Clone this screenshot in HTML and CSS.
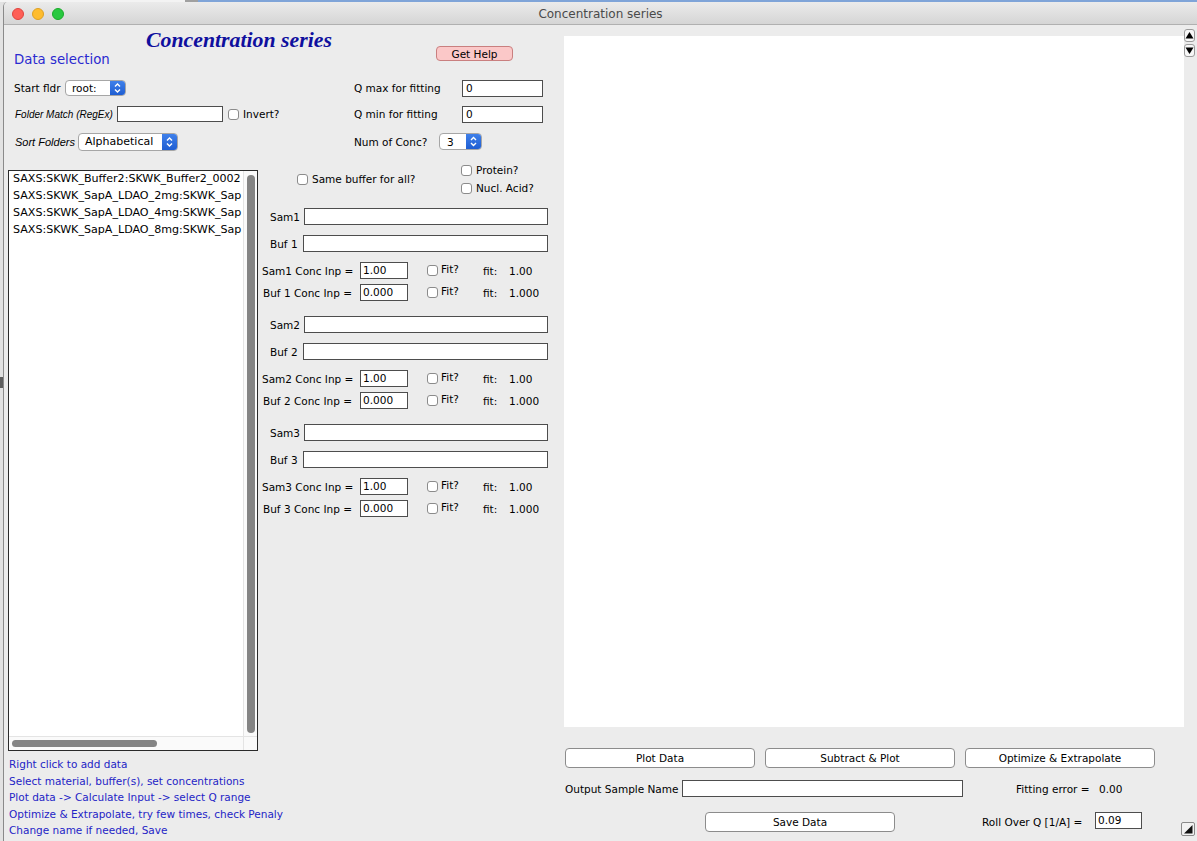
FILE: index.html
```html
<!DOCTYPE html>
<html>
<head>
<meta charset="utf-8">
<title>Concentration series</title>
<link rel="stylesheet" href="styles.css">
</head>
<body>
<div class="topstrip"><div class="ts-a"></div><div class="ts-b"></div><div class="ts-c"></div></div>
<div class="screen">
  <div class="desk-edge"><div class="edge-mark"></div></div>
  <div class="window">
    <div class="titlebar">
      <div class="lights"><span class="light red"></span><span class="light yellow"></span><span class="light green"></span></div>
      <div class="wtitle">Concentration series</div>
    </div>
    <div class="content">
      <div class="leftpanel">
        <div class="topgrid">
          <div class="head">
            <div class="ptitle">Concentration series</div>
            <div class="dsel">Data selection</div>
          </div>
          <div class="helpcell"><div class="btn help">Get Help</div></div>

          <div class="row r-start">
            <span class="lbl l-start">Start fldr</span>
            <span class="popup p-root"><span class="ptxt">root:</span><span class="pbtn"><svg width="15" height="16" viewBox="0 0 15 16"><polyline points="5,6.5 7.5,4 10,6.5" fill="none" stroke="#fff" stroke-width="1.4"/><polyline points="5,9.5 7.5,12 10,9.5" fill="none" stroke="#fff" stroke-width="1.4"/></svg></span></span>
          </div>
          <div class="row r-q">
            <span class="lbl l-q">Q max for fitting</span>
            <span class="inp i-q">0</span>
          </div>

          <div class="row r-folder">
            <span class="lbl l-folder">Folder Match (RegEx)</span>
            <span class="inp i-folder"></span>
            <span class="cb cb-inv"></span>
            <span class="cbt">Invert?</span>
          </div>
          <div class="row r-q">
            <span class="lbl l-q">Q min for fitting</span>
            <span class="inp i-q">0</span>
          </div>

          <div class="row r-sort">
            <span class="lbl l-sort">Sort Folders</span>
            <span class="popup p-sort"><span class="ptxt">Alphabetical</span><span class="pbtn"><svg width="15" height="18" viewBox="0 0 15 18"><polyline points="5,7.5 7.5,5 10,7.5" fill="none" stroke="#fff" stroke-width="1.4"/><polyline points="5,10.5 7.5,13 10,10.5" fill="none" stroke="#fff" stroke-width="1.4"/></svg></span></span>
          </div>
          <div class="row r-num">
            <span class="lbl l-num">Num of Conc?</span>
            <span class="popup p-num"><span class="ptxt">3</span><span class="pbtn"><svg width="15" height="17" viewBox="0 0 15 17"><polyline points="5,7 7.5,4.5 10,7" fill="none" stroke="#fff" stroke-width="1.4"/><polyline points="5,10 7.5,12.5 10,10" fill="none" stroke="#fff" stroke-width="1.4"/></svg></span></span>
          </div>
        </div>

        <div class="main">
          <div class="listcol">
            <div class="listbox">
              <div class="items">
                <div class="item">SAXS:SKWK_Buffer2:SKWK_Buffer2_0002</div>
                <div class="item">SAXS:SKWK_SapA_LDAO_2mg:SKWK_Sap</div>
                <div class="item">SAXS:SKWK_SapA_LDAO_4mg:SKWK_Sap</div>
                <div class="item">SAXS:SKWK_SapA_LDAO_8mg:SKWK_Sap</div>
              </div>
              <div class="vtrack"><div class="vthumb"></div></div>
              <div class="htrack"><div class="hthumb"></div></div>
              <div class="corner"></div>
            </div>
            <div class="helptext">
              <div>Right click to add data</div>
              <div>Select material, buffer(s), set concentrations</div>
              <div>Plot data -&gt; Calculate Input -&gt; select Q range</div>
              <div>Optimize &amp; Extrapolate, try few times, check Penaly</div>
              <div>Change name if needed, Save</div>
            </div>
          </div>

          <div class="midcol">
            <div class="mtop">
              <div class="same"><span class="cb"></span><span class="cbt">Same buffer for all?</span></div>
              <div class="prot">
                <div class="pline"><span class="cb"></span><span class="cbt">Protein?</span></div>
                <div class="pline"><span class="cb"></span><span class="cbt">Nucl. Acid?</span></div>
              </div>
            </div>

            <div class="grp g1">
              <div class="frow"><span class="slbl">Sam1</span><span class="inp wide"></span></div>
              <div class="frow brow"><span class="slbl blbl">Buf 1</span><span class="inp wide"></span></div>
              <div class="crow c1"><span class="clbl">Sam1 Conc Inp =</span><span class="inp cinp">1.00</span><span class="cb ccb"></span><span class="fitq">Fit?</span><span class="fitl">fit:</span><span class="fitv">1.00</span></div>
              <div class="crow c2"><span class="clbl">Buf 1 Conc Inp =</span><span class="inp cinp">0.000</span><span class="cb ccb"></span><span class="fitq">Fit?</span><span class="fitl">fit:</span><span class="fitv">1.000</span></div>
            </div>

            <div class="grp">
              <div class="frow"><span class="slbl">Sam2</span><span class="inp wide"></span></div>
              <div class="frow brow"><span class="slbl blbl">Buf 2</span><span class="inp wide"></span></div>
              <div class="crow c1"><span class="clbl">Sam2 Conc Inp =</span><span class="inp cinp">1.00</span><span class="cb ccb"></span><span class="fitq">Fit?</span><span class="fitl">fit:</span><span class="fitv">1.00</span></div>
              <div class="crow c2"><span class="clbl">Buf 2 Conc Inp =</span><span class="inp cinp">0.000</span><span class="cb ccb"></span><span class="fitq">Fit?</span><span class="fitl">fit:</span><span class="fitv">1.000</span></div>
            </div>

            <div class="grp">
              <div class="frow"><span class="slbl">Sam3</span><span class="inp wide"></span></div>
              <div class="frow brow"><span class="slbl blbl">Buf 3</span><span class="inp wide"></span></div>
              <div class="crow c1"><span class="clbl">Sam3 Conc Inp =</span><span class="inp cinp">1.00</span><span class="cb ccb"></span><span class="fitq">Fit?</span><span class="fitl">fit:</span><span class="fitv">1.00</span></div>
              <div class="crow c2"><span class="clbl">Buf 3 Conc Inp =</span><span class="inp cinp">0.000</span><span class="cb ccb"></span><span class="fitq">Fit?</span><span class="fitl">fit:</span><span class="fitv">1.000</span></div>
            </div>
          </div>
        </div>
      </div>

      <div class="rightpanel">
        <div class="plot"></div>
        <div class="arrows">
          <div class="abox"><svg width="9" height="9" viewBox="0 0 9 9"><polygon points="0.5,7.5 8.5,7.5 4.5,1" fill="#000"/></svg></div>
          <div class="abox"><svg width="9" height="9" viewBox="0 0 9 9"><polygon points="0.5,1.5 8.5,1.5 4.5,8" fill="#000"/></svg></div>
        </div>
        <div class="bottom">
          <div class="brow1">
            <div class="btn">Plot Data</div>
            <div class="btn">Subtract &amp; Plot</div>
            <div class="btn">Optimize &amp; Extrapolate</div>
          </div>
          <div class="brow2">
            <span class="lbl l-out">Output Sample Name</span>
            <span class="inp i-out"></span>
            <span class="lbl l-fit">Fitting error =</span>
            <span class="lbl v-fit">0.00</span>
          </div>
          <div class="brow3">
            <div class="btn b-save">Save Data</div>
            <span class="lbl l-roll">Roll Over Q [1/A] =</span>
            <span class="inp i-roll">0.09</span>
            <div class="grip"><svg width="12" height="12" viewBox="0 0 12 12"><polygon points="2,10.5 10.5,10.5 10.5,2" fill="#111"/></svg></div>
          </div>
        </div>
      </div>
    </div>
  </div>
</div>
</body>
</html>
```
FILE: styles.css
```css
* { box-sizing: border-box; margin: 0; padding: 0; }
html, body { width: 1197px; height: 841px; overflow: hidden; }
body {
  background: #dcdcdc;
  font-family: "DejaVu Sans", "Liberation Sans", sans-serif;
  font-size: 10.5px;
  color: #000;
}

.topstrip { display: flex; height: 2px; }
.ts-a { width: 185px; background: #f3f3f3; }
.ts-b { width: 13px; background: #a0a0a0; }
.ts-c { flex: 1; background: #7fa4d8; }

.screen { display: flex; height: 839px; }
.desk-edge { width: 3px; background: #e2e2e2; display: flex; flex-direction: column; }
.edge-mark { margin-top: 375px; height: 11px; background: #5e5e5e; }

.window {
  width: 1194px;
  background: #ececec;
  border-left: 1px solid #8a8a8a;
  border-radius: 5px 0 0 0;
  overflow: hidden;
  display: flex;
  flex-direction: column;
}

.titlebar {
  height: 23px;
  flex: none;
  background: linear-gradient(#ebebeb, #d5d5d5);
  border-bottom: 1px solid #b0b0b0;
  display: grid;
  align-items: center;
  padding-top: 2px;
}
.lights, .wtitle { grid-area: 1 / 1; }
.lights { display: flex; gap: 8px; padding-left: 8px; }
.light { width: 12px; height: 12px; border-radius: 50%; display: block; }
.red { background: #fe5f57; border: 1px solid #e0443e; }
.yellow { background: #febc2e; border: 1px solid #dea123; }
.green { background: #28c840; border: 1px solid #1aab29; }
.wtitle { justify-self: center; font-size: 12px; color: #4a4a4a; }

.content { flex: 1; display: flex; }

/* ---------- left panel ---------- */
.leftpanel { width: 560px; display: flex; flex-direction: column; }

.topgrid {
  display: grid;
  grid-template-columns: 350px 210px;
  grid-template-rows: 50px 26px 26px 29px;
}
.head { display: flex; flex-direction: column; }
.ptitle {
  padding-left: 142px;
  margin-top: 3px;
  line-height: 24px;
  font-family: "Liberation Serif", serif;
  font-weight: bold;
  font-style: italic;
  font-size: 21.8px;
  color: #0f0f9e;
  white-space: nowrap;
}
.dsel { padding-left: 10px; margin-top: -1px; font-size: 13.3px; line-height: 17px; color: #2a2ad0; }

.helpcell { padding-left: 82px; padding-top: 21px; }

.row { display: flex; align-items: center; }
.lbl { white-space: nowrap; flex: none; }

.r-start { padding-left: 10px; }
.l-start { width: 48px; }
.r-folder { padding-left: 11px; }
.l-folder { width: 102px; font-family: "Liberation Sans", sans-serif; font-style: italic; font-size: 10px; }
.r-sort { padding-left: 11px; }
.l-sort { width: 63px; font-family: "Liberation Sans", sans-serif; font-style: italic; font-size: 11px; }
.l-q { width: 108px; }
.l-num { width: 85px; }

.inp {
  display: block;
  flex: none;
  background: #fff;
  border: 1px solid #4d4d4d;
  height: 17px;
  line-height: 15px;
  padding-left: 3px;
  white-space: nowrap;
}
.i-q { width: 81px; }
.i-folder { width: 106px; height: 16px; }

.cb {
  display: block;
  flex: none;
  width: 11px;
  height: 11px;
  border: 1px solid #8b8b8b;
  border-radius: 3px;
  background: #fff;
}
.cbt { margin-left: 4px; white-space: nowrap; }
.cb-inv { margin-left: 5px; }

.popup {
  display: flex;
  flex: none;
  background: #fff;
  border: 1px solid #a6a6a6;
  border-radius: 4px;
  overflow: hidden;
  margin-left: 3px;
}
.ptxt { flex: 1; padding-left: 6px; display: flex; align-items: center; white-space: nowrap; }
.pbtn { width: 15px; background: linear-gradient(#3f80ea, #1f5ed2); display: flex; align-items: center; justify-content: center; }
.p-root { width: 61px; height: 16px; }
.p-sort { width: 100px; height: 18px; margin-left: 0; }
.p-sort .ptxt { font-size: 11px; padding-left: 6px; }
.p-num { width: 43px; height: 17px; margin-left: 0; }
.p-num .ptxt { padding-left: 7px; }

.btn {
  display: flex;
  align-items: center;
  justify-content: center;
  width: 190px;
  height: 20px;
  background: #fff;
  border: 1px solid #8c8c8c;
  border-radius: 4px;
  white-space: nowrap;
}
.help { width: 77px; height: 15px; background: #fbc8c8; border-color: #c97f7f; }

/* main area */
.main { display: flex; flex: 1; }
.listcol { margin-left: 4px; width: 250px; display: flex; flex-direction: column; }
.listbox {
  margin-top: 14px;
  height: 581px;
  border: 1px solid #2a2a2a;
  background: #fff;
  display: grid;
  grid-template-columns: 1fr 14px;
  grid-template-rows: 1fr 14px;
}
.items { padding-left: 4px; overflow: hidden; margin-top: -1px; font-size: 11.1px; }
.item { line-height: 17px; white-space: nowrap; }
.vtrack { border-left: 1px solid #e4e4e4; background: #fafafa; display: flex; justify-content: center; }
.vthumb { width: 8px; margin-top: 4px; margin-bottom: 3px; border-radius: 4px; background: #848484; }
.htrack { border-top: 1px solid #e4e4e4; background: #fafafa; }
.hthumb { width: 145px; height: 7px; margin-left: 3px; margin-top: 3px; border-radius: 4px; background: #848484; }
.corner { background: #fafafa; border-top: 1px solid #e4e4e4; border-left: 1px solid #e4e4e4; }

.helptext { margin-top: 5px; padding-left: 1px; line-height: 16.5px; color: #2424c6; white-space: nowrap; }

.midcol { margin-left: 4px; width: 286px; display: flex; flex-direction: column; }
.mtop { margin-top: 5px; height: 36px; display: grid; grid-template-columns: 199px 1fr; }
.same { padding-left: 35px; display: flex; align-items: center; }
.prot { display: flex; flex-direction: column; }
.pline { height: 18px; display: flex; align-items: center; }

.grp { margin-top: 15px; display: flex; flex-direction: column; }
.grp.g1 { margin-top: 11px; }
.frow { display: flex; align-items: center; height: 17px; }
.brow { margin-top: 10px; }
.slbl { width: 34px; margin-left: 8px; flex: none; white-space: nowrap; }
.blbl { width: 33px; }
.wide { flex: 1; }
.crow { display: flex; align-items: center; height: 17px; }
.c1 { margin-top: 10px; }
.c2 { margin-top: 5px; }
.clbl { width: 90px; text-align: right; white-space: nowrap; flex: none; }
.cinp { width: 48px; margin-left: 8px; padding-left: 2px; }
.ccb { margin-left: 19px; }
.fitq { margin-left: 3px; width: 42px; margin-bottom: 4px; flex: none; }
.fitl { width: 26px; flex: none; }
.fitv { white-space: nowrap; }

/* ---------- right panel ---------- */
.rightpanel {
  width: 633px;
  display: grid;
  grid-template-columns: 620px 13px;
  grid-template-rows: auto 1fr;
}
.plot { margin-top: 11px; height: 691px; background: #fff; }
.arrows { margin-top: 4px; display: flex; flex-direction: column; gap: 2px; }
.abox {
  width: 11px;
  height: 13px;
  border: 1px solid #9a9a9a;
  border-radius: 3px;
  background: #f7f7f7;
  display: flex;
  align-items: center;
  justify-content: center;
}
.bottom { grid-column: 1 / 3; padding-left: 1px; display: flex; flex-direction: column; }
.brow1 { margin-top: 21px; display: flex; gap: 10px; }
.brow2 { margin-top: 12px; display: flex; align-items: center; height: 17px; }
.l-out { width: 117px; }
.i-out { width: 281px; }
.l-fit { margin-left: 53px; width: 83px; }
.brow3 { margin-top: 15px; display: flex; align-items: center; height: 20px; }
.b-save { margin-left: 140px; }
.l-roll { margin-left: 87px; width: 113px; }
.i-roll { width: 47px; align-self: flex-start; padding-left: 2px; }
.grip {
  margin-left: auto;
  margin-right: 2px;
  align-self: flex-start;
  margin-top: 10px;
  width: 14px;
  height: 14px;
  border: 1px solid #8a8a8a;
  border-radius: 2px;
  background: #f2f2f2;
  display: flex;
  align-items: center;
  justify-content: center;
}
```
